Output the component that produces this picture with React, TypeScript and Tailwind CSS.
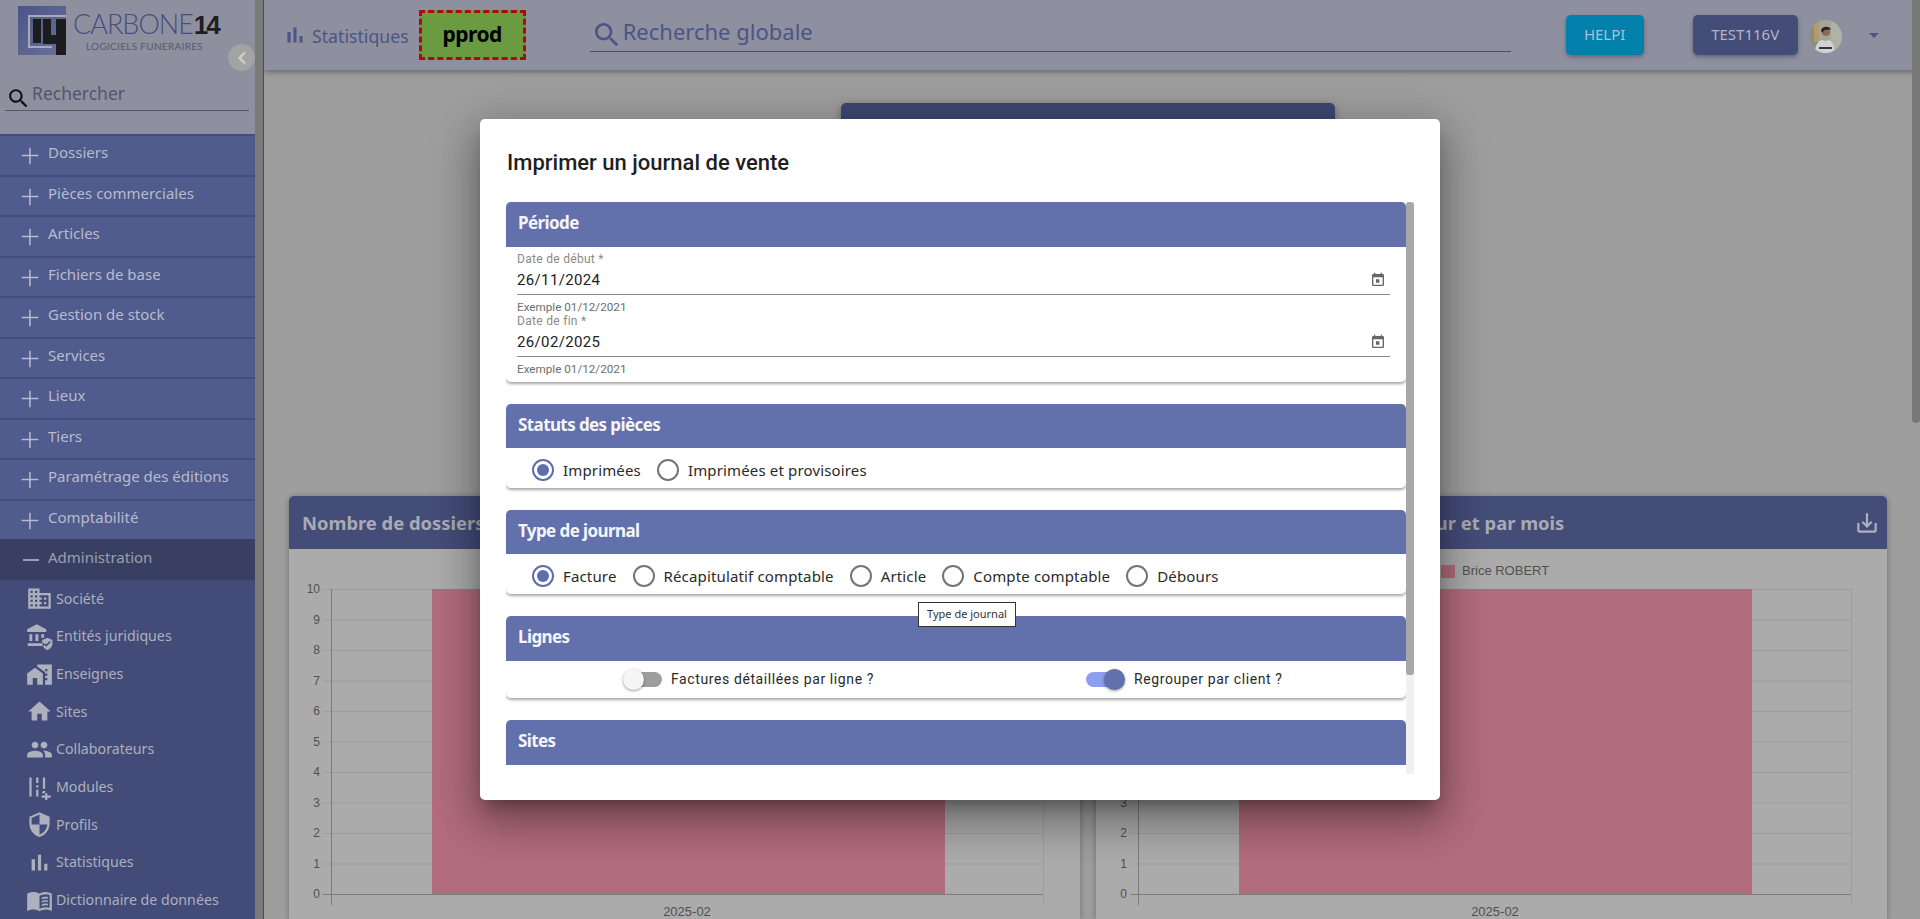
import React from "react";

const P = {
  add: "M11 2h1.8v8.6H22v1.8h-9.2V22H11v-9.6H2v-1.8h9z",
  bar: "M5 9.2h3V19H5zM10.6 5h2.8v14h-2.8zm5.6 8H19v6h-2.8z",
  search:
    "M15.5 14h-.79l-.28-.27C15.41 12.59 16 11.11 16 9.5 16 5.91 13.09 3 9.5 3S3 5.91 3 9.5 5.91 16 9.5 16c1.61 0 3.09-.59 4.23-1.57l.27.28v.79l5 4.99L20.49 19l-4.99-5zm-6 0C7.01 14 5 11.99 5 9.5S7.01 5 9.5 5 14 7.01 14 9.5 11.99 14 9.5 14z",
  business:
    "M12 7V3H2v18h20V7H12zM6 19H4v-2h2v2zm0-4H4v-2h2v2zm0-4H4V9h2v2zm0-4H4V5h2v2zm4 12H8v-2h2v2zm0-4H8v-2h2v2zm0-4H8V9h2v2zm0-4H8V5h2v2zm10 12h-8v-2h2v-2h-2v-2h2v-2h-2V9h8v10zm-2-8h-2v2h2v-2zm0 4h-2v2h2v-2z",
  balance:
    "M3 10v6h2.6v-6H3zm5.4 0v6H11v-6H8.4zM1.5 20.5H16V18H1.5v2.5zM13.5 10v3h2.6v-3h-2.6zM9.5 1 1 5.5V8h17V5.5L9.5 1z M19 13l-4.5 2v3c0 2.8 1.9 5.3 4.5 6 2.6-.7 4.5-3.2 4.5-6v-3L19 13zm-1 8-2-2 1-1 1 1 3-3 1 1-4 4z",
  homeWork:
    "M1 11v10h5v-6h4v6h5V11L8 6z M10 3v1.97l7 5.03V11h2v2h-2v2h2v2h-2v4h6V3H10zm9 6h-2V7h2v2z",
  home: "M10 20v-6h4v6h5v-8h3L12 3 2 12h3v8z",
  people:
    "M16 11c1.66 0 2.99-1.34 2.99-3S17.66 5 16 5c-1.66 0-3 1.34-3 3s1.34 3 3 3zm-8 0c1.66 0 2.99-1.34 2.99-3S9.66 5 8 5C6.34 5 5 6.34 5 8s1.34 3 3 3zm0 2c-2.33 0-7 1.17-7 3.5V19h14v-2.5c0-2.33-4.67-3.5-7-3.5zm8 0c-.29 0-.62.02-.97.05 1.16.84 1.97 1.97 1.97 3.45V19h6v-2.5c0-2.33-4.67-3.5-7-3.5z",
  modules:
    "M3 3h2v17H3zM9 3h2v5H9zM9 10h2v2H9zM9 14h2v6H9zM15 3h2v10h-2zM15 15h2v2h-3zM14 19h3v-2h2v2h3v2h-3v2h-2v-2h-3z",
  shield:
    "M12 1L3 5v6c0 5.55 3.84 10.74 9 12 5.16-1.26 9-6.45 9-12V5l-9-4zm0 10.99h7c-.53 4.12-3.28 7.79-7 8.94V12H5V6.3l7-3.11v8.8z",
  book:
    "M21 5c-1.11-.35-2.33-.5-3.5-.5-1.95 0-4.05.4-5.5 1.5-1.45-1.1-3.55-1.5-5.5-1.5S2.45 4.9 1 6v14.65c0 .25.25.5.5.5.1 0 .15-.05.25-.05C3.1 20.45 5.05 20 6.5 20c1.95 0 4.05.4 5.5 1.5 1.35-.85 3.8-1.5 5.5-1.5 1.65 0 3.35.3 4.75 1.05.1.05.15.05.25.05.25 0 .5-.25.5-.5V6c-.6-.45-1.25-.75-2-1zm0 13.5c-1.1-.35-2.3-.5-3.5-.5-1.7 0-4.15.65-5.5 1.5V8c1.35-.85 3.8-1.5 5.5-1.5 1.2 0 2.4.15 3.5.5v11.5zM14 9.5c.9-.4 2.2-.8 3.5-.8.7 0 1.4.1 2 .2v1.5c-.6-.2-1.3-.2-2-.2-1.3 0-2.5.3-3.5.8zM14 12.5c.9-.4 2.2-.8 3.5-.8.7 0 1.4.1 2 .2v1.5c-.6-.2-1.3-.2-2-.2-1.3 0-2.5.3-3.5.8zM14 15.5c.9-.4 2.2-.8 3.5-.8.7 0 1.4.1 2 .2v1.5c-.6-.2-1.3-.2-2-.2-1.3 0-2.5.3-3.5.8z",
  today:
    "M19 3h-1V1h-2v2H8V1H6v2H5c-1.11 0-1.99.9-1.99 2L3 19c0 1.1.89 2 2 2h14c1.1 0 2-.9 2-2V5c0-1.1-.9-2-2-2zm0 16H5V8h14v11zM9 11h5v5H9z",
  saveAlt:
    "M19 12v7H5v-7H3v7c0 1.1.9 2 2 2h14c1.1 0 2-.9 2-2v-7h-2zm-6 .67l2.59-2.58L17 11.5l-5 5-5-5 1.41-1.41L11 12.67V3h2z",
};

function Icon({ d, className }: { d: string; className: string }) {
  return (
    <svg viewBox="0 0 24 24" className={className} fill="currentColor" fillRule="evenodd">
      <path d={d} />
    </svg>
  );
}

function Logo() {
  return (
    <svg width="48" height="49" viewBox="0 0 48 49" className="shrink-0">
      <defs>
        <linearGradient id="lg" x1="0" y1="0" x2="1" y2="1">
          <stop offset="0" stopColor="#4a5588" />
          <stop offset="1" stopColor="#6a7199" />
        </linearGradient>
      </defs>
      <rect width="48" height="49" fill="url(#lg)" />
      <path d="M10 9h38v2H12v29h22v2H10z" fill="#a7a9b4" />
      <rect x="15" y="13" width="8" height="24" fill="#1c1c1e" />
      <rect x="25" y="13" width="8" height="24" fill="#1c1c1e" />
      <path d="M25 29h13V13h10v36H38V38H25z" fill="#1c1c1e" />
    </svg>
  );
}

function Avatar() {
  return (
    <svg width="33" height="33" viewBox="0 0 33 33" className="shrink-0">
      <defs>
        <clipPath id="av">
          <circle cx="16.5" cy="16.5" r="16.5" />
        </clipPath>
      </defs>
      <g clipPath="url(#av)">
        <rect width="33" height="33" fill="#a4a69a" />
        <rect x="0" y="0" width="9" height="33" fill="#8b8f80" />
        <rect x="5" y="0" width="5" height="22" fill="#b49a6a" />
        <rect x="22" y="0" width="11" height="33" fill="#b0b2a8" />
        <path d="M6 33c0-8 3-12 7-13l3 1 4-1c4 2 5 6 6 13z" fill="#cfd3d6" />
        <circle cx="17" cy="12" r="4" fill="#8a6c56" />
        <path d="M12 11c0-5 9-6 10-1-2-1-3 0-6 0-1 0-2 1-2 3z" fill="#2b2220" />
        <rect x="10" y="27" width="13" height="2" fill="#3b3533" />
      </g>
    </svg>
  );
}

const menu = [
  "Dossiers",
  "Pièces commerciales",
  "Articles",
  "Fichiers de base",
  "Gestion de stock",
  "Services",
  "Lieux",
  "Tiers",
  "Paramétrage des éditions",
  "Comptabilité",
];

const sub: [string, string][] = [
  ["Société", P.business],
  ["Entités juridiques", P.balance],
  ["Enseignes", P.homeWork],
  ["Sites", P.home],
  ["Collaborateurs", P.people],
  ["Modules", P.modules],
  ["Profils", P.shield],
  ["Statistiques", P.bar],
  ["Dictionnaire de données", P.book],
];

function Sidebar() {
  return (
    <aside className="relative flex h-full w-[264px] shrink-0 border-r border-[#42497a] bg-[#8e90a0]">
      <div className="flex h-full w-[255px] shrink-0 flex-col overflow-hidden">
        <div className="ml-[18px] mt-[6px] flex h-[55px] items-start">
          <Logo />
          <div className="ml-[7px] flex flex-col">
            <div className="mt-[4px] flex items-baseline leading-[28px]">
              <span className="font-['Lato'] text-[27px] font-light tracking-[-1px] text-[#454e80]">CARBONE</span>
              <span className="ml-[1px] font-['Liberation_Sans'] text-[26px] font-bold tracking-[-2px] text-[#1f1f22]">14</span>
            </div>
            <div className="ml-[13px] mt-[1px] font-['Lato'] text-[10px] leading-[12px] tracking-[0.3px] text-[#565a68]">
              LOGICIELS FUNERAIRES
            </div>
          </div>
        </div>
        <div className="ml-[5px] mt-[28px] flex h-[23px] w-[244px] items-start border-b border-[#53566a]">
          <Icon d={P.search} className="ml-[1px] mt-[-2px] h-[25px] w-[25px] text-[#111]" />
          <span className="ml-[1px] mt-[-7px] text-[17.5px] leading-[24px] text-[#53566b]">Rechercher</span>
        </div>
        <div className="mt-[23px] flex flex-col">
          {menu.map((m) => (
            <div key={m} className="flex h-[40.5px] items-start border-t-2 border-[#444d7d] bg-[#505b8e] text-[#b9bccb]">
              <Icon d={P.add} className="ml-[20px] mt-[10px] h-[20px] w-[20px]" />
              <span className="ml-[8px] mt-[6px] text-[15px] leading-[20px]">{m}</span>
            </div>
          ))}
          <div className="flex h-[40.5px] items-start bg-[#383f63] text-[#9c9fae]">
            <div className="ml-[23px] mt-[20px] h-[2px] w-[16px] bg-[#9c9fae]" />
            <span className="ml-[9px] mt-[8px] text-[15px] leading-[20px]">Administration</span>
          </div>
          {sub.map(([t, d]) => (
            <div key={t} className="flex h-[37.7px] items-center bg-[#434c78] text-[#adb0bd]">
              <Icon d={d} className="ml-[26px] h-[27px] w-[27px] shrink-0" />
              <span className="ml-[3px] text-[14.2px] leading-[20px]">{t}</span>
            </div>
          ))}
        </div>
      </div>
      <div className="h-full w-[8px] bg-[#7a7a7a]" />
      <div className="absolute left-[228px] top-[44px] flex h-[27px] w-[27px] items-center justify-center rounded-full bg-[#a3a3a3] text-[#cfcfcf]">
        <svg width="10" height="14" viewBox="0 0 10 14" fill="none" stroke="currentColor" strokeWidth="2.4">
          <path d="M8 1.5 2.5 7 8 12.5" />
        </svg>
      </div>
    </aside>
  );
}

function Header() {
  return (
    <header className="flex h-[70px] shrink-0 items-start bg-[#8e90a0] shadow-[0_2px_6px_rgba(0,0,0,0.35)]">
      <Icon d={P.bar} className="ml-[18px] mt-[22px] h-[26px] w-[26px] text-[#4c5586]" />
      <span className="ml-[4px] mt-[24px] text-[17.7px] leading-[24px] text-[#4c5586]">Statistiques</span>
      <div className="ml-[10px] mt-[10px] flex h-[50px] w-[107px] items-center justify-center border-[3px] border-dashed border-[#ad0a0a] bg-[#6b9b41] text-[21px] font-bold tracking-[-0.5px] text-black">
        pprod
      </div>
      <div className="ml-[64px] mt-[16px] flex h-[36px] w-[921px] items-start border-b border-[#464e7f] text-[#4c5586]">
        <Icon d={P.search} className="ml-[1px] mt-[3px] h-[32px] w-[32px]" />
        <span className="mt-[1px] text-[22px] leading-[28px]">Recherche globale</span>
      </div>
      <div className="ml-[55px] mt-[15px] flex h-[40px] w-[78px] items-center justify-center rounded-[5px] bg-[#0080ab] pb-[2px] text-[15px] text-[#a9c3cd] shadow-[0_2px_4px_rgba(0,0,0,0.3)]">
        HELPI
      </div>
      <div className="ml-[49px] mt-[15px] flex h-[40px] w-[105px] items-center justify-center rounded-[5px] bg-[#444c78] pb-[2px] text-[15px] text-[#b4b6c1] shadow-[0_2px_4px_rgba(0,0,0,0.3)]">
        TEST116V
      </div>
      <div className="ml-[11px] mt-[20px]">
        <Avatar />
      </div>
      <div className="ml-[27px] mt-[33px] h-0 w-0 border-x-[5px] border-t-[5px] border-x-transparent border-t-[#4c5586]" />
    </header>
  );
}

const ticks = [0, 1, 2, 3, 4, 5, 6, 7, 8, 9, 10];

function Chart({ legend, right }: { legend?: boolean; right: number }) {
  const yOf = (v: number) => 345 - v * 30.5;
  return (
    <svg width="791" height="370" viewBox="0 0 791 370" className="block">
      {ticks.map((v) => (
        <g key={v}>
          <line x1="34" x2={right} y1={yOf(v) + 0.5} y2={yOf(v) + 0.5} stroke={v === 0 ? "#7b7b7b" : "#9d9d9d"} />
          <text x="31" y={yOf(v) + 4} textAnchor="end" fontFamily="Liberation Sans" fontSize="12" fill="#505050">
            {v}
          </text>
        </g>
      ))}
      <line x1="42.5" x2="42.5" y1="40" y2="356" stroke="#7b7b7b" />
      <line x1={right + 0.5} x2={right + 0.5} y1="40" y2="356" stroke="#9d9d9d" />
      <rect x="143" y="40" width="513" height="305" fill="#b26c7b" />
      <text x={right - 356} y="367" textAnchor="middle" fontFamily="Liberation Sans" fontSize="13" fill="#505050">
        2025-02
      </text>
      {legend && (
        <>
          <rect x="345" y="16" width="14" height="13" fill="#b26c7b" />
          <text x="366" y="26" fontFamily="Liberation Sans" fontSize="13" fill="#505050">
            Brice ROBERT
          </text>
        </>
      )}
    </svg>
  );
}

function Panel({ title, legend, right, icon }: { title: string; legend?: boolean; right: number; icon?: boolean }) {
  return (
    <section className="h-[423px] overflow-hidden rounded-t-[5px] bg-[#ababab] shadow-[0_1px_6px_rgba(0,0,0,0.3)]">
      <div className="flex h-[53px] items-center justify-between bg-[#444c78] pl-[13px] pr-[7px]">
        <span className="text-[18.4px] font-bold text-[#a9abb4]">{title}</span>
        {icon && <Icon d={P.saveAlt} className="h-[26px] w-[26px] text-[#b0b2bd]" />}
      </div>
      <Chart legend={legend} right={right} />
    </section>
  );
}

function Radio({ label, on }: { label: string; on?: boolean }) {
  return (
    <div className="flex items-center">
      <div
        className={
          on
            ? "flex h-[22px] w-[22px] items-center justify-center rounded-full border-2 border-[#5f6dab]"
            : "h-[22px] w-[22px] rounded-full border-2 border-[#757575]"
        }
      >
        {on && <div className="h-[12px] w-[12px] rounded-full bg-[#5f6dab]" />}
      </div>
      <span className="ml-[9px] text-[15px] leading-[22px] tracking-[0.15px] text-[#2a2a2a]">{label}</span>
    </div>
  );
}

function Field({ label, value }: { label: string; value: string }) {
  return (
    <div className="h-[62px] font-['Roboto']">
      <div className="h-[16px] text-[12px] leading-[16px] tracking-[0.3px] text-[#8a8a8a]">{label}</div>
      <div className="flex h-[28px] items-center justify-between border-b border-[#8c8c8c] pb-[1px] pr-[4px]">
        <span className="text-[15px] leading-[20px] tracking-[0.35px] text-[#222]">{value}</span>
        <Icon d={P.today} className="h-[16px] w-[16px] text-[#666]" />
      </div>
      <div className="h-[18px] pt-[6px] text-[11.7px] leading-[12px] text-[#6e6e6e]">Exemple 01/12/2021</div>
    </div>
  );
}

function Card({
  title,
  headClass,
  children,
}: {
  title: string;
  headClass: string;
  children?: React.ReactNode;
}) {
  return (
    <div className="rounded-[5px] bg-white shadow-[0_2px_3px_rgba(0,0,0,0.35)]">
      <div className={headClass}>
        <span className="mt-[-3px] text-[17px] font-bold tracking-[-0.6px] text-[#f4f5fa]">{title}</span>
      </div>
      {children}
    </div>
  );
}

const head45 = "flex h-[45px] items-center rounded-t-[5px] bg-[#6270ab] pl-[12px]";
const head44 = "flex h-[44px] items-center rounded-t-[5px] bg-[#6270ab] pl-[12px]";

function Modal() {
  return (
    <div className="absolute left-[480px] top-[119px] flex h-[681px] w-[960px] flex-col rounded-[5px] bg-white shadow-[0_11px_15px_-7px_rgba(0,0,0,0.3),0_24px_38px_3px_rgba(0,0,0,0.2),0_9px_46px_8px_rgba(0,0,0,0.2)]">
      <h2 className="ml-[27px] mt-[29px] h-[54px] font-['Roboto'] text-[22px] font-medium leading-[30px] text-[#1f1f1f]">
        Imprimer un journal de vente
      </h2>
      <div className="ml-[26px] flex h-[572px] w-[908px] overflow-hidden">
        <div className="flex w-[900px] shrink-0 flex-col gap-[22px]">
          <Card title="Période" headClass={head45}>
            <div className="pb-[7px] pl-[11px] pr-[16px] pt-[4px]">
              <Field label="Date de début *" value="26/11/2024" />
              <Field label="Date de fin *" value="26/02/2025" />
            </div>
          </Card>
          <Card title="Statuts des pièces" headClass={head44}>
            <div className="flex h-[40px] items-start gap-[16px] pl-[26px] pt-[11px]">
              <Radio label="Imprimées" on />
              <Radio label="Imprimées et provisoires" />
            </div>
          </Card>
          <Card title="Type de journal" headClass={head44}>
            <div className="flex h-[40px] items-start gap-[16px] pl-[26px] pt-[11px]">
              <Radio label="Facture" on />
              <Radio label="Récapitulatif comptable" />
              <Radio label="Article" />
              <Radio label="Compte comptable" />
              <Radio label="Débours" />
            </div>
          </Card>
          <Card title="Lignes" headClass={head45}>
            <div className="flex h-[37px] items-center pl-[117px] font-['Roboto'] text-[14px] tracking-[0.6px] text-[#2a2a2a]">
              <div className="relative h-[15px] w-[39px]">
                <div className="absolute left-[5px] top-0 h-[15px] w-[34px] rounded-full bg-[#9e9e9e]" />
                <div className="absolute left-0 top-[-3px] h-[21px] w-[21px] rounded-full bg-[#f5f5f5] shadow-[0_1px_3px_rgba(0,0,0,0.4)]" />
              </div>
              <span className="ml-[9px]">Factures détaillées par ligne ?</span>
              <div className="relative ml-[212px] h-[15px] w-[39px]">
                <div className="absolute left-0 top-0 h-[15px] w-[34px] rounded-full bg-[#8c9ef2]" />
                <div className="absolute left-[18px] top-[-3px] h-[21px] w-[21px] rounded-full bg-[#6270ab] shadow-[0_1px_3px_rgba(0,0,0,0.4)]" />
              </div>
              <span className="ml-[9px]">Regrouper par client ?</span>
            </div>
          </Card>
          <Card title="Sites" headClass={head45}>
            <div className="h-[40px]" />
          </Card>
        </div>
        <div className="h-[572px] w-[8px] shrink-0 bg-[#f1f1f1]">
          <div className="h-[473px] w-[8px] rounded-[3px] bg-[#a8a8a8]" />
        </div>
      </div>
      <div className="absolute left-[438px] top-[483px] flex h-[25px] w-[98px] items-center justify-center border border-[#333] bg-white text-[11px] text-[#333]">
        Type de journal
      </div>
    </div>
  );
}

export default function App() {
  return (
    <div className="relative flex h-[919px] w-[1920px] overflow-hidden bg-[#9e9e9e] font-['Noto_Sans',sans-serif]">
      <Sidebar />
      <main className="flex h-full min-w-0 flex-1 flex-col">
        <Header />
        <div className="flex flex-col px-[25px] pr-[33px] pt-[33px]">
          <div className="mx-auto h-[360px] w-[494px] rounded-t-[5px] bg-[#3f4770] shadow-[0_2px_8px_rgba(0,0,0,0.3)]" />
          <div className="mt-[33px] grid grid-cols-2 gap-[16px]">
            <Panel title="Nombre de dossiers" right={754} />
            <Panel title="Nombre de dossiers par collaborateur et par mois" legend right={755} icon />
          </div>
        </div>
      </main>
      <div className="absolute right-0 top-0 h-[423px] w-[8px] rounded-b-[4px] bg-[#787878]" />
      <Modal />
    </div>
  );
}
